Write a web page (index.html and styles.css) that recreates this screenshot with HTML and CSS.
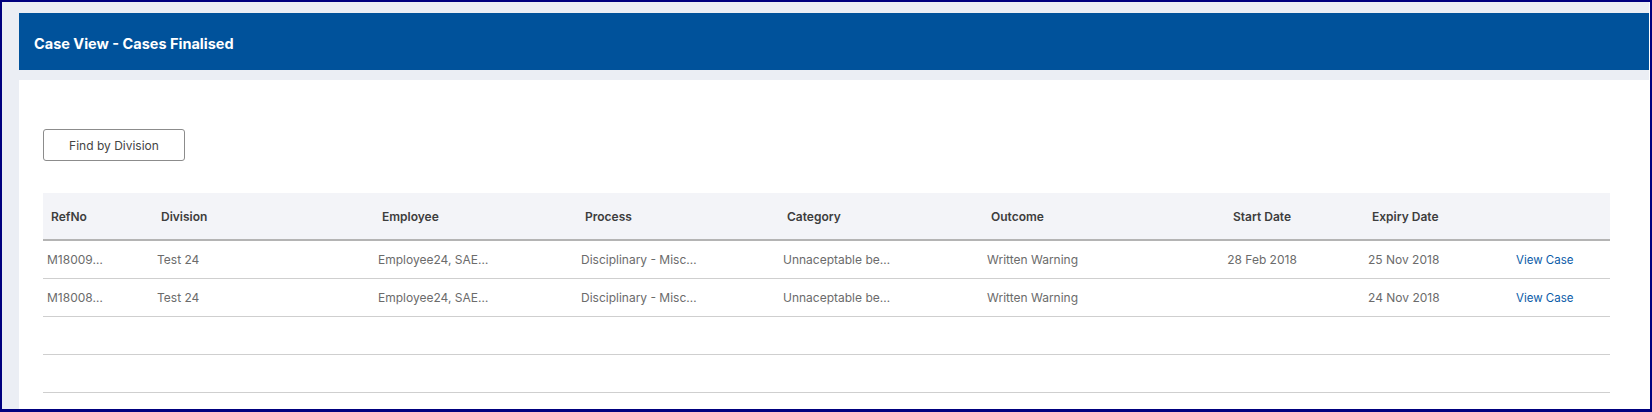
FILE: index.html
```html
<!DOCTYPE html>
<html lang="en">
<head>
<meta charset="utf-8">
<title>Case View - Cases Finalised</title>
<link rel="stylesheet" href="styles.css">
</head>
<body>
<div class="frame">
  <div class="page">
    <div class="titlebar"><h1 class="title">Case View - Cases Finalised</h1></div>
    <div class="content">
      <button class="btn" type="button">Find by Division</button>
      <table class="grid">
        <colgroup>
          <col class="c-ref"><col class="c-div"><col class="c-emp"><col class="c-proc"><col class="c-cat"><col class="c-out"><col class="c-start"><col class="c-exp"><col class="c-act">
        </colgroup>
        <thead>
          <tr>
            <th>RefNo</th><th>Division</th><th>Employee</th><th>Process</th><th>Category</th><th>Outcome</th><th class="ctr">Start Date</th><th>Expiry Date</th><th></th>
          </tr>
        </thead>
        <tbody>
          <tr>
            <td>M18009…</td><td>Test 24</td><td>Employee24, SAE…</td><td>Disciplinary - Misc…</td><td>Unnaceptable be…</td><td>Written Warning</td><td class="ctr">28 Feb 2018</td><td>25 Nov 2018</td><td><a class="link" href="#">View Case</a></td>
          </tr>
          <tr>
            <td>M18008…</td><td>Test 24</td><td>Employee24, SAE…</td><td>Disciplinary - Misc…</td><td>Unnaceptable be…</td><td>Written Warning</td><td class="ctr"></td><td>24 Nov 2018</td><td><a class="link" href="#">View Case</a></td>
          </tr>
          <tr class="empty"><td></td><td></td><td></td><td></td><td></td><td></td><td></td><td></td><td></td></tr>
          <tr class="empty"><td></td><td></td><td></td><td></td><td></td><td></td><td></td><td></td><td></td></tr>
          <tr class="empty"><td></td><td></td><td></td><td></td><td></td><td></td><td></td><td></td><td></td></tr>
        </tbody>
      </table>
    </div>
  </div>
</div>
</body>
</html>
```

FILE: styles.css
```css
html, body {
  margin: 0;
  padding: 0;
}
body {
  font-family: Inter, Roboto, "Liberation Sans", sans-serif;
  background: #ffffff;
}
.frame {
  box-sizing: border-box;
  width: 1652px;
  height: 412px;
  border: 2px solid #00007f;
  border-bottom-width: 3px;
  background: #ffffff;
  overflow: hidden;
}
.page {
  box-sizing: border-box;
  height: 100%;
  margin-right: 1px;
  padding: 11px 0 0 17px;
  background: #ebeef4;
  display: flex;
  flex-direction: column;
}
.titlebar {
  box-sizing: border-box;
  height: 57px;
  flex: none;
  background: #00529b;
  display: flex;
  align-items: center;
  padding: 3px 0 0 15px;
}
.title {
  margin: 0;
  font-size: 14.5px;
  font-weight: 700;
  color: #ffffff;
}
.content {
  margin-top: 10px;
  flex: 1;
  background: #ffffff;
  padding: 49px 39px 0 24px;
  overflow: hidden;
}
.btn {
  display: block;
  box-sizing: border-box;
  width: 142px;
  height: 32px;
  padding: 0;
  border: 1px solid #8c8c8c;
  border-radius: 3px;
  background: #ffffff;
  font-family: Inter, Roboto, "Liberation Sans", sans-serif;
  font-size: 12px;
  color: #444444;
}
.grid {
  margin-top: 32px;
  width: 100%;
  table-layout: fixed;
  border-collapse: separate;
  border-spacing: 0;
  font-size: 12px;
}
.c-ref { width: 110px; }
.c-div { width: 221px; }
.c-emp { width: 203px; }
.c-proc { width: 202px; }
.c-cat { width: 204px; }
.c-out { width: 177px; }
.c-start { width: 204px; }
.c-exp { width: 148px; }
.c-act { width: 98px; }
.grid thead tr {
  height: 48px;
}
.grid th {
  background: #f3f4f8;
  border-bottom: 2px solid #b4b4b4;
  padding: 0 8px;
  text-align: left;
  font-weight: 600;
  color: #3d3d3d;
  white-space: nowrap;
}
.grid tbody tr {
  height: 38px;
}
.grid td {
  border-bottom: 1px solid #cfcfcf;
  padding: 0 4px;
  color: #6b6b6b;
  white-space: nowrap;
}
.grid .ctr {
  text-align: center;
}
.link {
  color: #0b5ca8;
  font-size: 11.5px;
  text-decoration: none;
}
```
